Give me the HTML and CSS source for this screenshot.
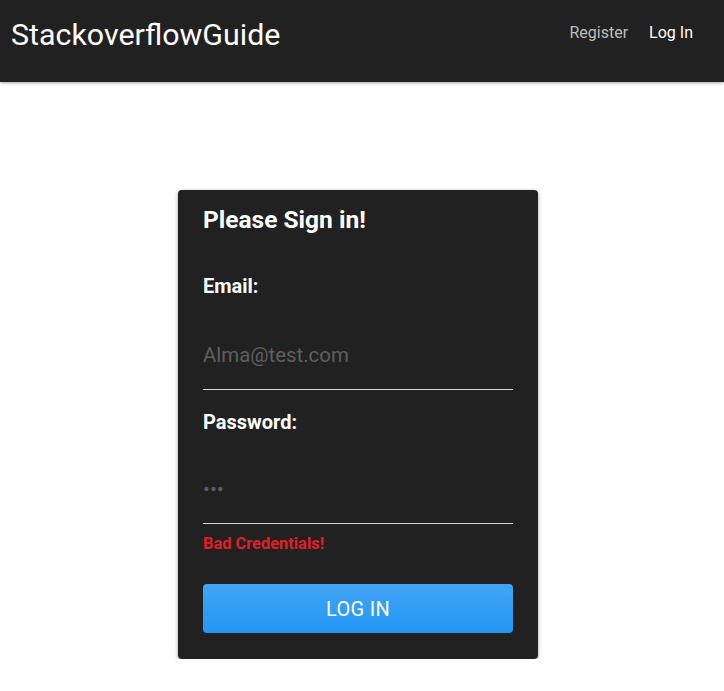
FILE: index.html
```html
<!DOCTYPE html>
<html lang="en">
<head>
<meta charset="utf-8">
<title>StackoverflowGuide</title>
<link rel="stylesheet" href="styles.css">
</head>
<body>
<header class="topbar">
  <div class="brand">StackoverflowGuide</div>
  <nav class="nav">
    <a class="nav-link" href="#">Register</a>
    <a class="nav-link active" href="#">Log In</a>
  </nav>
</header>
<main class="main">
  <form class="card">
    <h2 class="card-title">Please Sign in!</h2>
    <label class="field-label" for="email">Email:</label>
    <input class="field-input" id="email" type="text" placeholder="Alma@test.com">
    <label class="field-label pw-label" for="pw">Password:</label>
    <input class="field-input pw-input" id="pw" type="text" placeholder="•••">
    <div class="error">Bad Credentials!</div>
    <button class="btn" type="button">LOG IN</button>
  </form>
</main>
</body>
</html>
```
FILE: styles.css
```css
* { box-sizing: border-box; }
html, body {
  margin: 0;
  padding: 0;
  background: #ffffff;
  font-family: Roboto, "Liberation Sans", sans-serif;
}
.topbar {
  height: 82px;
  background: #212121;
  display: flex;
  justify-content: space-between;
  align-items: flex-start;
  padding: 0 31px 0 11px;
  box-shadow: 0 1px 3px rgba(0,0,0,0.35);
  position: relative;
}
.brand {
  color: #ffffff;
  font-size: 30.4px;
  line-height: 34px;
  margin-top: 18px;
}
.nav {
  display: flex;
  gap: 21px;
  margin-top: 23px;
}
.nav-link {
  color: #bdbdbd;
  text-decoration: none;
  font-size: 16px;
  line-height: 20px;
}
.nav-link.active { color: #ffffff; }
.main {
  display: flex;
  justify-content: center;
  padding: 108px 8px 0 0;
}
.card {
  width: 360px;
  background: #212121;
  border-radius: 4px;
  padding: 16px 25px 26px;
  box-shadow: 0 1px 4px rgba(0,0,0,0.35);
  display: flex;
  flex-direction: column;
}
.card-title {
  margin: 0;
  color: #ffffff;
  font-size: 24.5px;
  line-height: 28px;
  font-weight: 700;
}
.field-label {
  color: #ffffff;
  font-size: 20px;
  line-height: 24px;
  font-weight: 700;
  margin-top: 40px;
}
.pw-label { margin-top: 20px; }
.field-input {
  display: block;
  width: 100%;
  height: 69px;
  margin-top: 23px;
  padding: 0;
  background: transparent;
  border: none;
  border-bottom: 1px solid #d6d6d6;
  color: #ffffff;
  font-family: Roboto, "Liberation Sans", sans-serif;
  font-size: 20.4px;
  outline: none;
}
.pw-input { margin-top: 21px; }
.field-input::placeholder { color: #5f5f5f; }
.error {
  color: #e21f26;
  font-size: 16.4px;
  line-height: 20px;
  font-weight: 700;
  margin-top: 10px;
}
.btn {
  margin-top: 30px;
  height: 49px;
  border: none;
  border-radius: 4px;
  background: linear-gradient(#42a5f5, #2196f3);
  color: #ffffff;
  font-family: Roboto, "Liberation Sans", sans-serif;
  font-size: 20px;
  letter-spacing: 0.3px;
  cursor: pointer;
}
```
